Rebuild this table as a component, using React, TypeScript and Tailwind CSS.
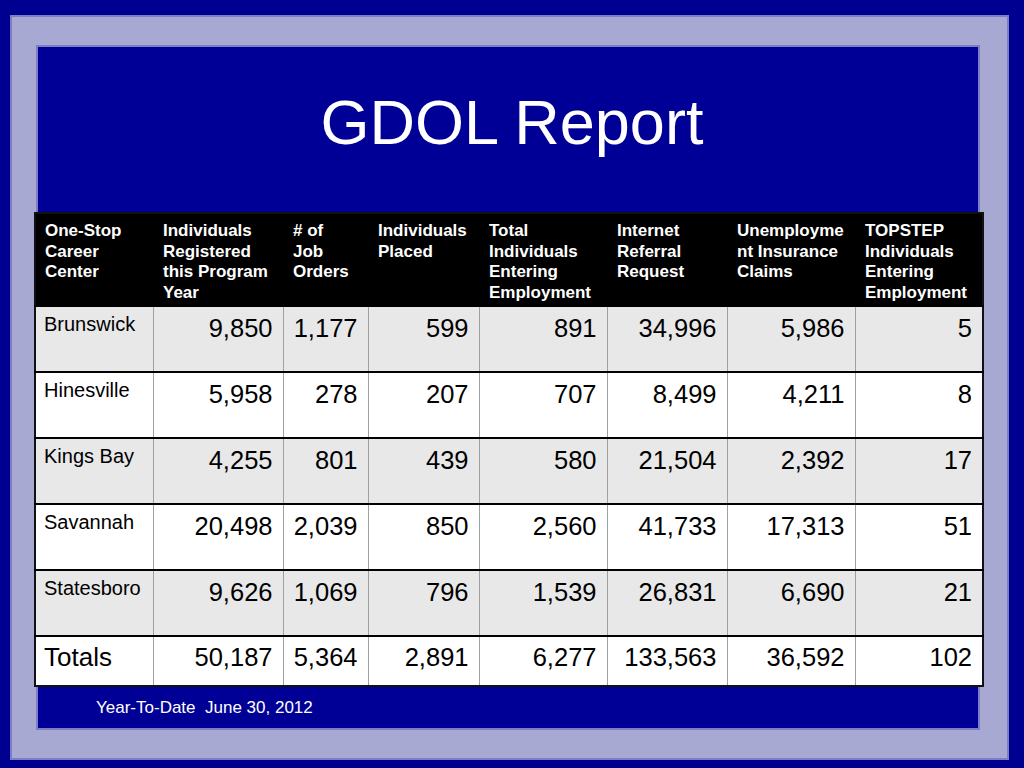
import React from 'react';

const columns = [
  { w: 'w-[118px]', lines: ['One-Stop', 'Career', 'Center'] },
  { w: 'w-[130px]', lines: ['Individuals', 'Registered', 'this Program', 'Year'] },
  { w: 'w-[85px]', lines: ['# of', 'Job', 'Orders'] },
  { w: 'w-[111px]', lines: ['Individuals', 'Placed'] },
  { w: 'w-[128px]', lines: ['Total', 'Individuals', 'Entering', 'Employment'] },
  { w: 'w-[120px]', lines: ['Internet', 'Referral', 'Request'] },
  { w: 'w-[128px]', lines: ['Unemployme', 'nt Insurance', 'Claims'] },
  { w: 'w-[128px]', lines: ['TOPSTEP', 'Individuals', 'Entering', 'Employment'] },
];

const rows = [
  ['Brunswick', '9,850', '1,177', '599', '891', '34,996', '5,986', '5'],
  ['Hinesville', '5,958', '278', '207', '707', '8,499', '4,211', '8'],
  ['Kings Bay', '4,255', '801', '439', '580', '21,504', '2,392', '17'],
  ['Savannah', '20,498', '2,039', '850', '2,560', '41,733', '17,313', '51'],
  ['Statesboro', '9,626', '1,069', '796', '1,539', '26,831', '6,690', '21'],
];

const totals = ['Totals', '50,187', '5,364', '2,891', '6,277', '133,563', '36,592', '102'];

export default function App() {
  return (
    <div className="w-[1024px] h-[768px] bg-[#000090] pt-[17px] pl-[12px] font-[family-name:Liberation_Sans,Arial,sans-serif]">
      <div className="w-[995px] h-[741px] border-t-[28px] border-b-[28px] border-l-[24px] border-r-[27px] border-[#a8a9d3] shadow-[0_0_0_2px_#7c7dc2,inset_0_0_0_2px_#7c7dc2] bg-[#000096]">
        <div className="h-[167px] pt-[46px] pl-[8px] text-center">
          <h1 className="text-[63px] leading-none text-white">GDOL Report</h1>
        </div>

        <table className="-mx-[2px] w-[948px] table-fixed border-collapse border-2 border-[#111]">
          <thead>
            <tr className="bg-black">
              {columns.map((c, i) => (
                <th
                  key={i}
                  className={`${c.w} h-[93px] align-top pt-[7px] ${i === 0 ? 'pl-[9px]' : 'pl-[10px]'} pr-[2px] text-left text-[17px] leading-[20.5px] font-bold text-white`}
                >
                  {c.lines.map((l, j) => (
                    <div key={j} className="whitespace-nowrap">{l}</div>
                  ))}
                </th>
              ))}
            </tr>
          </thead>
          <tbody>
            {rows.map((r, i) => (
              <tr key={i} className={`border-t-2 border-black ${i % 2 === 0 ? 'bg-[#e8e8e8]' : 'bg-white'}`}>
                {r.map((v, j) =>
                  j === 0 ? (
                    <td key={j} className="h-[66px] align-top pt-[5px] pl-[8px] text-[20px] leading-[24px] text-black">
                      {v}
                    </td>
                  ) : (
                    <td
                      key={j}
                      className="h-[66px] align-top pt-[6px] pr-[10px] text-right text-[25.5px] leading-[30px] text-black border-l border-[#a0a0a0]"
                    >
                      {v}
                    </td>
                  )
                )}
              </tr>
            ))}
            <tr className="border-t-2 border-black bg-white">
              {totals.map((v, j) => (
                <td
                  key={j}
                  className={`h-[50px] align-top pt-[5px] leading-[30px] text-black ${
                    j === 0 ? 'pl-[8px] text-left text-[26px]' : 'pr-[10px] text-right text-[25.5px] border-l border-[#a0a0a0]'
                  }`}
                >
                  {v}
                </td>
              ))}
            </tr>
          </tbody>
        </table>

        <p className="mt-[11px] pl-[60px] text-[17px] leading-[20px] text-white whitespace-pre">
          Year-To-Date  June 30, 2012
        </p>
      </div>
    </div>
  );
}
